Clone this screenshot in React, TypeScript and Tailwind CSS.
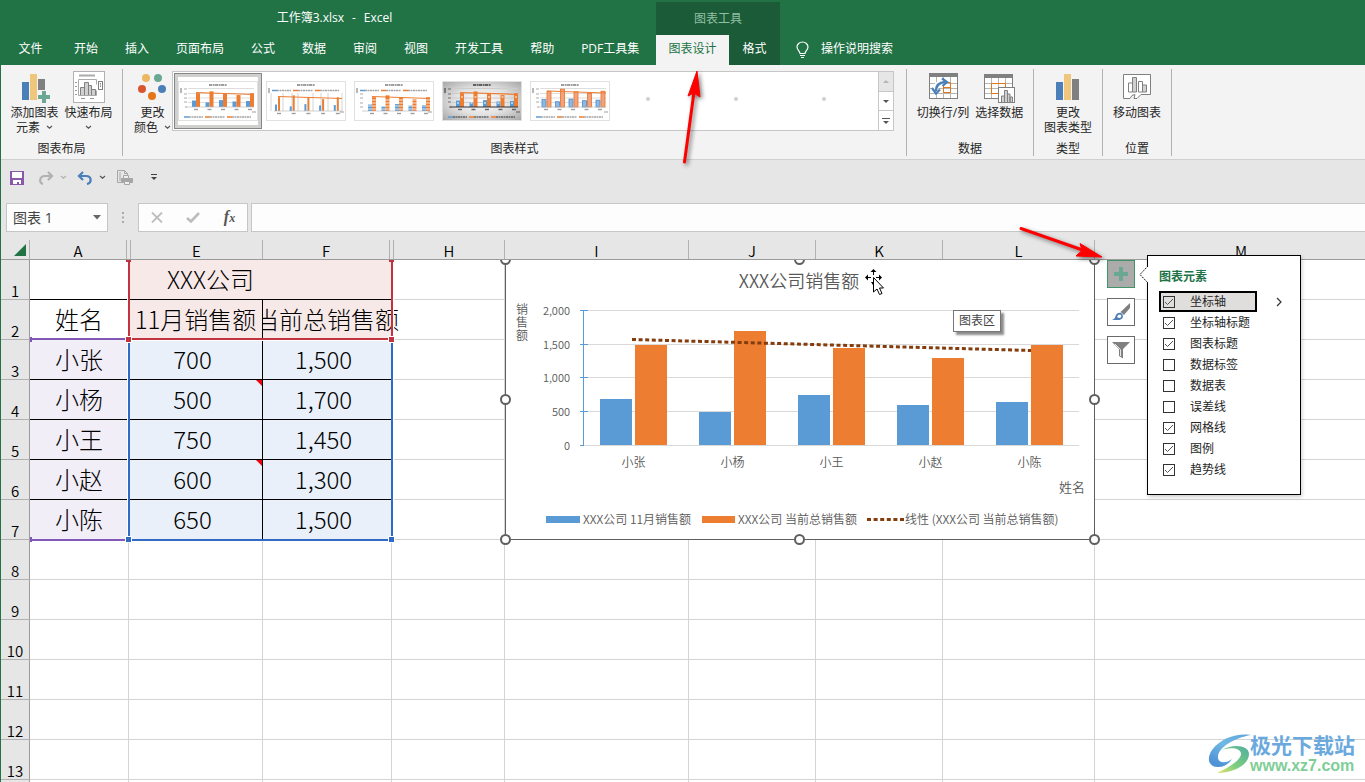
import React from "react";

const UI_FONT = "font-['Open_Sans','Noto_Sans_CJK_SC',sans-serif]";
const CJK_FONT = "font-['Noto_Sans_CJK_SC',sans-serif]";

/* ---------- small glyphs ---------- */

function Chevron({ className = "text-[#555]" }: { className?: string }) {
  return (
    <svg width="7" height="5" viewBox="0 0 7 5" className={className} aria-hidden="true">
      <path d="M1 1l2.5 2.2L6 1" fill="none" stroke="currentColor" strokeWidth="1.2" />
    </svg>
  );
}

function BarsIcon({ plus = false }: { plus?: boolean }) {
  return (
    <svg width="32" height="32" viewBox="0 0 32 32" aria-hidden="true">
      <rect x="4" y="11" width="7" height="18" fill="#4a7fb8" />
      <rect x="12" y="3" width="7" height="26" fill="#efc77c" />
      <rect x="20" y="8" width="7" height={plus ? 12 : 21} fill="#808080" />
      {plus && (
        <>
          <path d="M19 19h13v12H19z" fill="#f3f3f3" />
          <path d="M24 20h4v4h4v4h-4v4h-4v-4h-4v-4h4z" fill="#6ba893" />
        </>
      )}
    </svg>
  );
}

function QuickLayoutIcon() {
  return (
    <svg width="32" height="32" viewBox="0 0 32 32" fill="none" stroke="#808080" aria-hidden="true">
      <rect x=".5" y=".5" width="31" height="31" fill="#fff" stroke="#b1b1b1" />
      <path d="M6 4.500h16" stroke="#aaa" strokeWidth="2" />
      <path d="M5.500 8.500h18v5M5.500 8.500v16h18v-5" stroke="#aaa" />
      <path d="M2 11.500h2M2 15.500h2M2 19.500h2M2 23.500h2M8 27.500h4M17 27.500h4" stroke="#999" />
      <path d="M7.500 24V16.500h4V24M11.500 24V11.500h4V24M15.500 24V14.500h3V24M18.500 24V18.500h4V24" fill="#d0d0d0" />
      <rect x="25.500" y="10.500" width="4" height="8" />
      <path d="M27.500 12v5" strokeDasharray="1.500 1" />
    </svg>
  );
}

function ColorsIcon() {
  return (
    <svg width="32" height="32" viewBox="0 0 32 32" aria-hidden="true">
      <circle cx="10" cy="7" r="4" fill="#ecb763" />
      <circle cx="22" cy="7" r="4" fill="#6ba893" />
      <circle cx="6" cy="18" r="4" fill="#d9552f" />
      <circle cx="26" cy="18" r="4" fill="#4a7fb8" />
      <circle cx="16" cy="25" r="4" fill="#e27619" />
    </svg>
  );
}

function SwitchIcon() {
  return (
    <svg width="32" height="32" viewBox="0 0 32 32" fill="none" aria-hidden="true">
      <rect x="2.500" y="4.500" width="28" height="23" fill="#fff" stroke="#808080" />
      <path d="M3 12.500h27M3 17.500h27M3 22.500h27M9.500 5v22M16.500 5v22M23.500 5v22" stroke="#b5b5b5" />
      <rect x="2" y="2" width="29" height="4" fill="#808080" />
      <path d="M16.500 11.500h7v10h-7zM16.500 16.500h7" stroke="#e27619" />
      <path d="M8 21C8 15 11 11 18 11" stroke="#fff" strokeWidth="5" />
      <path d="M9 20c0-5 3-8.500 9-9" stroke="#4a7fb8" strokeWidth="2.400" />
      <path d="M5 17l4 5.500 4-4M15 7.500l5 3.500-4.500 4" stroke="#4a7fb8" strokeWidth="2.200" />
    </svg>
  );
}

function SelectDataIcon() {
  return (
    <svg width="32" height="32" viewBox="0 0 32 32" fill="none" aria-hidden="true">
      <rect x="1.500" y="4.500" width="28" height="23" fill="#fff" stroke="#808080" />
      <path d="M2 12.500h27M2 17.500h27M2 22.500h27M8.500 5v22M15.500 5v22M22.500 5v22" stroke="#b5b5b5" />
      <rect x="1" y="3" width="29" height="4" fill="#808080" />
      <path d="M8.500 23V12.500h14V16M8.500 22.500h7" stroke="#e27619" />
      <rect x="15.500" y="16.500" width="16" height="15" fill="#fff" stroke="#808080" />
      <path d="M18.500 31v-6h3v6M21.500 31V19.500h3V31M24.500 31v-8h2.500v8M27 31v-5h2.500v5" fill="#d0d0d0" stroke="#808080" />
    </svg>
  );
}

function MoveChartIcon() {
  return (
    <svg width="32" height="32" viewBox="0 0 32 32" fill="none" stroke="#808080" aria-hidden="true">
      <path d="M2.500 3.500h27v20H20l-4 4h-3l1-4-3 1-2 3H2.500z" fill="#fff" />
      <path d="M7.500 21v-9h4v9z" />
      <path d="M11.500 21V6.500h4V21z" fill="#d0d0d0" />
      <path d="M17.500 21V10.500h4V21z" />
      <path d="M21.500 21v-7h4v7z" fill="#d0d0d0" />
    </svg>
  );
}

/* ---------- ribbon ---------- */

function RibbonButton({ icon, children }: { icon: React.ReactNode; children: React.ReactNode }) {
  return (
    <button className="flex flex-col items-center px-[3px] text-xs leading-[15px] whitespace-nowrap text-[#262626]">
      <span className="mb-[2px] block h-8">{icon}</span>
      {children}
    </button>
  );
}

function RibbonGroup({
  label,
  className = "",
  children,
}: {
  label: string;
  className?: string;
  children: React.ReactNode;
}) {
  return (
    <section className={`flex flex-none flex-col justify-between border-r border-[#b1b1b1] pt-[2px] ${className}`}>
      <div className="flex justify-center">{children}</div>
      <h2 className="text-center text-xs leading-[15px] text-[#262626]">{label}</h2>
    </section>
  );
}

const SERIES = [
  { name: "小张", month: 700, total: 1500 },
  { name: "小杨", month: 500, total: 1700 },
  { name: "小王", month: 750, total: 1450 },
  { name: "小赵", month: 600, total: 1300 },
  { name: "小陈", month: 650, total: 1500 },
];

type ThumbKind = "plain" | "lines" | "striped" | "dark" | "outlined";

function Thumb({ kind }: { kind: ThumbKind }) {
  const topLegend = kind === "lines" || kind === "striped";
  const base = topLegend ? 30 : 26;
  const scale = kind === "outlined" ? 0.0105 : 0.0092;
  const thin = kind === "lines";
  const ink = kind === "dark" ? "#444" : "#888";
  const legendY = topLegend ? 9.5 : 36;
  const orange = kind === "outlined" ? "#f3a37c" : "#ed7d31";
  const blue = kind === "outlined" ? "#8db9e4" : "#5b9bd5";
  const gap = thin ? 3 : kind === "outlined" ? 5 : 4;
  return (
    <svg width="80" height="40" viewBox="0 0 80 40" aria-hidden="true">
      <defs>
        <radialGradient id="thumb-shade" r=".7">
          <stop offset="0" stopColor="#fff" />
          <stop offset=".5" stopColor="#e2e2e2" />
          <stop offset="1" stopColor="#a6a6a6" />
        </radialGradient>
      </defs>
      <rect x=".5" y=".5" width="79" height="39" fill={kind === "dark" ? "url(#thumb-shade)" : "#fff"} stroke="#e0e0e0" />
      <path d="M31 4h18" stroke={ink} strokeWidth="2" strokeDasharray="3 .6 2 .4" opacity=".8" />
      <path d="M3 7v5" stroke={ink} strokeWidth="1.500" opacity=".8" />
      {thin ? (
        <path d="M5 12v18M17 12v18M26 12v18M32 12v18M47 12v18M55 12v18M62 12v18M76 12v18" stroke="#d4d4d4" />
      ) : topLegend ? null : (
        <path d="M10 7.500h66M10 12.500h66M10 17h66M10 21.500h66" stroke={kind === "dark" ? "#ccc" : "#ddd"} />
      )}
      <path
        d={topLegend ? "M6 13h3M6 17h3M6 22h3M6 26h3" : "M6 8h3M6 13h3M6 17h3M6 21h3M7 26h2"}
        stroke={ink} strokeWidth="1.200" opacity={thin ? 0 : 0.7}
      />
      {SERIES.map((s, i) => {
        const x = (thin ? 9 : kind === "outlined" ? 12 : 14) + i * (thin ? 14.7 : 13.5);
        return (
          <g key={s.name}>
            <rect
              x={x} y={base - s.month * scale} width={thin ? 2 : 4} height={s.month * scale}
              fill={blue} stroke={kind === "outlined" ? "#4a8ac8" : "none"} strokeWidth=".8"
            />
            <rect
              x={x + gap} y={base - s.total * scale} width={thin ? 2 : 4} height={s.total * scale}
              fill={orange} stroke={kind === "outlined" ? "#e8702a" : "none"} strokeWidth=".8"
            />
            {kind === "striped" && (
              <path
                d={`M${x} ${base - 2}h9M${x} ${base - 5}h9M${x} ${base - 8}h9M${x} ${base - 11}h9`}
                stroke="#fff" strokeWidth=".8"
              />
            )}
            {kind === "dark" && (
              <path d={`M${x + 1} ${base - 4}h2M${x + 5} ${base - 10}h2`} stroke="#fff" strokeWidth="1" />
            )}
            <path d={`M${x + 2} ${base + 2.500}h4`} stroke={ink} strokeWidth="1.400" opacity=".8" />
          </g>
        );
      })}
      <path d={`M8 ${base}h68`} stroke={kind === "dark" ? "#333" : "#bbb"} strokeWidth={kind === "dark" ? 1.2 : 0.7} />
      <path
        d={kind === "outlined" ? "M17 10L76 12" : `M${thin ? 12 : 18} ${base - 14.500}L76 ${base - 12.500}`}
        stroke="#ed7d31" strokeWidth="1.200"
      />
      <path d="M74 31h4" stroke={ink} opacity=".8" />
      <path d={`M6 ${legendY}h5`} stroke="#5b9bd5" strokeWidth="1.500" />
      <path d={`M27 ${legendY}h5M49 ${legendY}h5`} stroke="#ed7d31" strokeWidth="1.500" />
      <path d={`M11 ${legendY}h14M32 ${legendY}h15M54 ${legendY}h19`} stroke={ink} strokeWidth="1.500" strokeDasharray="2 .5" opacity=".75" />
    </svg>
  );
}

const THUMBS: ThumbKind[] = ["plain", "lines", "striped", "dark", "outlined"];

function StyleGallery() {
  return (
    <div className="-ml-[2px] mr-1 flex h-[60px] w-[722px] border border-[#c6c6c6] bg-white">
      <div className="flex flex-1 items-center pl-px">
        {THUMBS.map((kind, i) => (
          <button
            key={kind}
            aria-label={`样式 ${i + 1}`}
            className={
              i === 0
                ? "h-14 w-[88px] border border-[#868686] bg-[#d0d0ce] p-[3px]"
                : "flex h-14 w-[88px] items-center justify-center"
            }
          >
            {i === 0 ? (
              <span className="flex h-full items-center justify-center bg-white">
                <Thumb kind={kind} />
              </span>
            ) : (
              <Thumb kind={kind} />
            )}
          </button>
        ))}
        {[6, 7, 8].map((n) => (
          <button key={n} aria-label={`样式 ${n}`} className="flex h-14 w-[88px] items-center pl-8">
            <span className="mb-1 size-1 rounded-full bg-[#cfcfcf]" />
          </button>
        ))}
      </div>
      <div className="flex w-[15px] flex-col border-l border-[#c6c6c6]">
        <button aria-label="向上" className="flex flex-1 items-center justify-center bg-[#e6e6e6]">
          <svg width="6" height="3" viewBox="0 0 6 3"><path d="M0 3l3-3 3 3z" fill="#b5b5b5" /></svg>
        </button>
        <button aria-label="向下" className="flex flex-1 items-center justify-center border-y border-[#c6c6c6]">
          <svg width="6" height="3" viewBox="0 0 6 3"><path d="M0 0l3 3 3-3z" fill="#555" /></svg>
        </button>
        <button aria-label="其他" className="flex flex-1 items-center justify-center">
          <svg width="8" height="6" viewBox="0 0 8 6"><path d="M0 .5h8" stroke="#555" /><path d="M1 3l3 3 3-3z" fill="#555" /></svg>
        </button>
      </div>
    </div>
  );
}

function Ribbon() {
  return (
    <div className="flex h-[95px] flex-none border-b border-[#d0d0d0] bg-[#f3f3f3] pt-1 pb-[3px]">
      <RibbonGroup label="图表布局" className="w-[122px]">
        <RibbonButton icon={<BarsIcon plus />}>
          <span>添加图表</span>
          <span className="flex items-center gap-1.5">元素 <Chevron /></span>
        </RibbonButton>
        <RibbonButton icon={<QuickLayoutIcon />}>
          <span>快速布局</span>
          <span className="flex h-[15px] items-center"><Chevron /></span>
        </RibbonButton>
      </RibbonGroup>
      <RibbonGroup label="图表样式" className="w-[784px]">
        <RibbonButton icon={<ColorsIcon />}>
          <span>更改</span>
          <span className="flex items-center gap-1.5">颜色 <Chevron /></span>
        </RibbonButton>
        <StyleGallery />
      </RibbonGroup>
      <RibbonGroup label="数据" className="w-[127px]">
        <RibbonButton icon={<SwitchIcon />}>切换行/列</RibbonButton>
        <RibbonButton icon={<SelectDataIcon />}>选择数据</RibbonButton>
      </RibbonGroup>
      <RibbonGroup label="类型" className="w-[69px]">
        <RibbonButton icon={<BarsIcon />}>
          <span>更改</span>
          <span>图表类型</span>
        </RibbonButton>
      </RibbonGroup>
      <RibbonGroup label="位置" className="w-[69px]">
        <RibbonButton icon={<MoveChartIcon />}>移动图表</RibbonButton>
      </RibbonGroup>
    </div>
  );
}

/* ---------- header ---------- */

const TABS = ["开始", "插入", "页面布局", "公式", "数据", "审阅", "视图", "开发工具", "帮助", "PDF工具集"];

function Header() {
  return (
    <header className="flex h-[65px] flex-none bg-[#217346] text-xs text-white">
      <div className="flex w-[655px] flex-none flex-col">
        <h1 className="flex h-[35px] items-center justify-center gap-2 pl-3">
          <span>工作簿3.xlsx</span>
          <span>-</span>
          <span>Excel</span>
        </h1>
        <nav className="flex h-[30px] gap-px pb-[2px]">
          <button className="w-[59px]">文件</button>
          {TABS.map((t) => (
            <button key={t} className="px-[13px] whitespace-nowrap">{t}</button>
          ))}
        </nav>
      </div>
      <div className="mt-[2px] flex flex-none flex-col bg-[#1b5b38]">
        <div className="flex h-[33px] items-center justify-center text-[#92bfa4]">图表工具</div>
        <div className="flex h-[30px]">
          <button className="w-[73px] bg-[#f3f3f3] pb-[2px] text-[#217346]">图表设计</button>
          <button className="w-[51px] pb-[2px]">格式</button>
        </div>
      </div>
      <button className="ml-4 flex h-[30px] items-center gap-3 self-end pb-[2px]">
        <svg width="13" height="18" viewBox="0 0 13 18" fill="none" stroke="#fff" strokeWidth="1.200" className="mt-[2px]">
          <path d="M4 12.500C4 10 1 9 1 6a5.500 5 0 0 1 11 0c0 3-3 4-3 6.500zM4 14.500h5M5 16.500h3" />
        </svg>
        操作说明搜索
      </button>
    </header>
  );
}

function QuickAccess() {
  return (
    <div className="flex h-[35px] flex-none items-center pl-2">
      <button aria-label="保存">
        <svg width="16" height="16" viewBox="0 0 16 16">
          <path d="M1 1h14v14H1z" fill="#8a57ab" />
          <path d="M3 2h10v6H3zM4 10h8v4h-2v-2H8v2H4z" fill="#fff" />
        </svg>
      </button>
      <button aria-label="恢复" className="ml-[13px] flex items-center gap-1.5 text-[#b1b1b1]">
        <svg width="16" height="14" viewBox="0 0 16 14" fill="none" stroke="currentColor" strokeWidth="2.200">
          <path d="M10 1l4 4-4 4M14 5H7C1 5 1 12 5 13" />
        </svg>
        <Chevron className="text-[#b1b1b1]" />
      </button>
      <button aria-label="撤消" className="ml-2.5 flex items-center gap-1.5 text-[#4a7fb8]">
        <svg width="16" height="14" viewBox="0 0 16 14" fill="none" stroke="currentColor" strokeWidth="2.200">
          <path d="M6 1L2 5l4 4M2 5h7c6 0 6 7 1 8" />
        </svg>
        <Chevron />
      </button>
      <button aria-label="打印预览" className="ml-2.5">
        <svg width="18" height="17" viewBox="0 0 18 17" fill="none" stroke="#a6a6a6">
          <path d="M5 13.500H1.500v-12h7l3 3V7M8.500 1.500v3h3M4 3v9" />
          <path d="M7.500 10V6.500h5V10" fill="#eee" />
          <path d="M5.500 9.500h11v4h-11z" fill="#a6a6a6" />
          <path d="M8.500 12.500h5v3h-5z" fill="#eee" />
        </svg>
      </button>
      <button aria-label="自定义快速访问工具栏" className="ml-4">
        <svg width="8" height="7" viewBox="0 0 8 7"><path d="M1 .5h6" stroke="#444" /><path d="M1 3h6L4 6z" fill="#444" /></svg>
      </button>
    </div>
  );
}

function FormulaBar() {
  return (
    <div className="flex h-[45px] flex-none items-center pl-[5px]">
      <div className="flex h-[29px] w-[102px] flex-none items-center border border-[#c6c6c6] bg-[#fdfdfd]">
        <input aria-label="名称框" defaultValue="图表 1" className="w-full min-w-0 bg-transparent pl-1.5 text-[14px] text-[#444] outline-none" />
        <svg width="8" height="5" viewBox="0 0 8 5" className="mr-1.5 flex-none"><path d="M0 0h8L4 4.500z" fill="#666" /></svg>
      </div>
      <svg width="2" height="12" viewBox="0 0 2 12" className="mx-[14px] flex-none">
        <path d="M0 0h2v2H0zM0 4.500h2v2H0zM0 9h2v2H0z" fill="#aaa" />
      </svg>
      <div className="flex h-[29px] w-[110px] flex-none items-center justify-around border border-[#c6c6c6] bg-[#fdfdfd]">
        <button aria-label="取消">
          <svg width="12" height="11" viewBox="0 0 12 11" stroke="#bdbdbd" strokeWidth="1.800"><path d="M1 .5l10 10M11 .5l-10 10" /></svg>
        </button>
        <button aria-label="输入">
          <svg width="14" height="11" viewBox="0 0 14 11" fill="none" stroke="#bdbdbd" strokeWidth="2.600"><path d="M1 6l4 3.500L13 1" /></svg>
        </button>
        <button aria-label="插入函数" className="font-['Liberation_Serif',serif] text-[16px] leading-4 font-bold text-[#555] italic">
          f<span className="text-[12px]">x</span>
        </button>
      </div>
      <input aria-label="编辑栏" className="ml-[3px] h-[29px] min-w-0 flex-1 border border-r-0 border-[#c6c6c6] bg-[#fdfdfd] px-2 outline-none" />
    </div>
  );
}

/* ---------- sheet ---------- */

const HEADS: { name: string; line: string }[] = [
  { name: "A", line: "mr-[2px] border-r" },
  { name: "E", line: "ml-px border-x" },
  { name: "F", line: "mr-[2px] border-r" },
  { name: "H", line: "ml-px border-x" },
  { name: "I", line: "border-r" },
  { name: "J", line: "border-r" },
  { name: "K", line: "border-r" },
  { name: "L", line: "border-r" },
  { name: "M", line: "" },
];
const ROWS = [1, 2, 3, 4, 5, 6, 7, 8, 9, 10, 11, 12, 13, 14];

const GRID = "border-r border-b border-[#d4d4d4] p-0";
const INNER = "border-r border-b border-r-black border-b-black p-0 text-center align-top";

function DataCells({ row }: { row: number }) {
  if (row === 1) {
    return (
      <>
        <td className="border-r border-b border-r-[#d4d4d4] border-b-black p-0" />
        <td colSpan={2} className="border-b border-black bg-[#f8e9e9] p-0 pr-[100px] text-center align-top">XXX公司</td>
      </>
    );
  }
  if (row === 2) {
    return (
      <>
        <td className="border-r border-b border-r-[#d4d4d4] border-b-black p-0 text-center align-top">姓名</td>
        <td className={`${INNER} bg-[#f8e9e9]`}>11月销售额</td>
        <td className="border-b border-black bg-[#f8e9e9] p-0 align-top">
          <div className="w-[138px] overflow-hidden"><div className="-ml-2 whitespace-nowrap">当前总销售额</div></div>
        </td>
      </>
    );
  }
  if (row <= 7) {
    const s = SERIES[row - 3];
    return (
      <>
        <td className="border-r border-b border-black bg-[#f2eef8] p-0 text-center align-top">{s.name}</td>
        <td className={`${INNER} relative bg-[#e9f0fa] pr-[6px]`}>
          {s.month}
          {(row === 4 || row === 6) && (
            <svg width="6" height="6" viewBox="0 0 6 6" className="absolute top-0 right-0"><path d="M0 0h6v6z" fill="#f00010" /></svg>
          )}
        </td>
        <td className="border-b border-black bg-[#e9f0fa] p-0 pr-2 text-center align-top">{s.total.toLocaleString("en-US")}</td>
      </>
    );
  }
  return (
    <>
      <td className={GRID} />
      <td className={GRID} />
      <td className={GRID} />
    </>
  );
}

function Grid() {
  return (
    <table className={`w-full min-w-[1386px] table-fixed border-separate border-spacing-0 bg-white text-[24px] leading-[37px] font-light text-black ${CJK_FONT}`}>
      <colgroup>
        <col className="w-[29px]" />
        <col className="w-[99px]" />
        <col className="w-[134px]" />
        <col className="w-[129px]" />
        <col className="w-[113px]" />
        <col className="w-[184px]" />
        <col className="w-[127px]" />
        <col className="w-[127px]" />
        <col className="w-[152px]" />
        <col />
      </colgroup>
      <thead>
        <tr className="h-5 bg-[#e6e6e6] text-[15px] leading-[19px]">
          <th aria-label="全选" className="border-r border-b border-r-[#b1b1b1] border-b-[#9b9b9b] p-0">
            <svg width="12" height="12" viewBox="0 0 12 12" className="ml-auto mr-[3px]"><path d="M12 0v12H0z" fill="#217346" /></svg>
          </th>
          {HEADS.map((h) => (
            <th key={h.name} scope="col" className="border-b border-[#9b9b9b] p-0 font-[350]">
              <div className={`h-[19px] border-[#b1b1b1] pt-px ${h.line}`}>{h.name}</div>
            </th>
          ))}
        </tr>
      </thead>
      <tbody>
        {ROWS.map((r) => (
          <tr key={r} className="h-10">
            <th scope="row" className="border-r border-b border-r-[#9b9b9b] border-b-[#b1b1b1] bg-[#e6e6e6] p-0 align-bottom text-[15px] leading-4 font-[350]">
              {r}
            </th>
            <DataCells row={r} />
            <td className={GRID} />
            <td className={GRID} />
            <td className={GRID} />
            <td className={GRID} />
            <td className={GRID} />
            <td className={GRID} />
          </tr>
        ))}
      </tbody>
    </table>
  );
}

function RangeFrames() {
  return (
    <div aria-hidden="true">
      <div className="absolute top-[98px] left-[30px] h-[2px] w-[97px] bg-[#8257b8]" />
      <div className="absolute top-[299px] left-[30px] h-[2px] w-[97px] bg-[#8257b8]" />
      <div className="absolute top-[97px] left-[29px] h-[5px] w-[2px] bg-[#8257b8]" />
      <div className="absolute top-[297px] left-[29px] h-[5px] w-[2px] bg-[#8257b8]" />
      <div className="absolute top-[100px] left-[126px] h-[202px] w-[267px] border border-white">
        <div className="size-full border-2 border-t-0 border-[#2f6ac4]" />
      </div>
      <div className="absolute top-[20px] left-[126px] h-[81px] w-[267px] border border-t-0 border-white">
        <div className="size-full border-2 border-t-0 border-[#c1343f]" />
      </div>
      <div className="absolute top-[96px] left-[124px] size-[7px] border border-white bg-[#c1343f]" />
      <div className="absolute top-[96px] left-[387px] size-[7px] border border-white bg-[#c1343f]" />
      <div className="absolute top-[20px] left-[125px] h-[2px] w-[5px] bg-[#c1343f]" />
      <div className="absolute top-[20px] left-[388px] h-[2px] w-[5px] bg-[#c1343f]" />
      <div className="absolute top-[296px] left-[124px] size-[7px] border border-white bg-[#2f6ac4]" />
      <div className="absolute top-[296px] left-[387px] size-[7px] border border-white bg-[#2f6ac4]" />
    </div>
  );
}

const TICKS = [0, 500, 1000, 1500, 2000];
const yOf = (v: number) => 185.5 - Math.round(v * 0.0675);

function SalesChart() {
  return (
    <svg
      width="602" height="287" viewBox="-6 0 602 287"
      className={`absolute top-[20px] left-[498px] ${CJK_FONT}`}
      fill="#595959" fontSize="12" fontWeight="350" role="img" aria-label="XXX公司销售额"
    >
      <path d="M.5 -1V279.500H589.500V-1" fill="#fff" stroke="#5f5f5f" />
      <text x="294" y="28" fontSize="18" textAnchor="middle">XXX公司销售额</text>
      <text x="11" y="54">销</text>
      <text x="11" y="67">售</text>
      <text x="11" y="80">额</text>
      {TICKS.map((t) => (
        <g key={t}>
          <path d={`M79 ${yOf(t)}H574`} stroke="#d9d9d9" />
          <path d={`M75 ${yOf(t)}H${t ? 83 : 79}`} stroke="#5b9bd5" />
          <text x="65" y={yOf(t) + 4} fontSize="11" textAnchor="end">{t.toLocaleString("en-US")}</text>
        </g>
      ))}
      <path d="M78.500 50V186" stroke="#5b9bd5" />
      {SERIES.map((s, i) => (
        <g key={s.name}>
          <rect x={95 + i * 99} y={yOf(s.month) + 0.5} width="32" height={184.5 - yOf(s.month)} fill="#5b9bd5" />
          <rect x={130 + i * 99} y={yOf(s.total) + 0.5} width="32" height={184.5 - yOf(s.total)} fill="#ed7d31" />
          <text x={128.500 + i * 99} y="207" textAnchor="middle">{s.name}</text>
        </g>
      ))}
      <path d="M127 79.500L526 90.500" stroke="#843c0c" strokeWidth="3" strokeDasharray="4 2.600" />
      <text x="554" y="232" fontSize="13">姓名</text>
      <rect x="41" y="256" width="34" height="7" fill="#5b9bd5" />
      <text x="78" y="264">XXX公司 11月销售额</text>
      <rect x="197" y="256" width="33" height="7" fill="#ed7d31" />
      <text x="233" y="264">XXX公司 当前总销售额</text>
      <path d="M362 259.500h37" stroke="#843c0c" strokeWidth="3" strokeDasharray="4 2.600" />
      <text x="400" y="264">线性 (XXX公司 当前总销售额)</text>
      <g fill="#fff" stroke="#5f5f5f" strokeWidth="2">
        {[0.5, 294.5, 589.5].map((x) => (
          <g key={x}>
            <circle cx={x} cy="-0.500" r="4.500" />
            <circle cx={x} cy="279.500" r="4.500" />
          </g>
        ))}
        <circle cx=".5" cy="139.500" r="4.500" />
        <circle cx="589.500" cy="139.500" r="4.500" />
      </g>
    </svg>
  );
}

const ELEMENTS: { label: string; on: boolean }[] = [
  { label: "坐标轴", on: true },
  { label: "坐标轴标题", on: true },
  { label: "图表标题", on: true },
  { label: "数据标签", on: false },
  { label: "数据表", on: false },
  { label: "误差线", on: false },
  { label: "网格线", on: true },
  { label: "图例", on: true },
  { label: "趋势线", on: true },
];

function ElementsPanel() {
  return (
    <div className="absolute top-[15px] left-[1146px] h-[240px] w-[154px] border border-black bg-white pt-[11px] pl-[11px] text-xs text-[#262626] shadow-[1px_2px_4px_rgba(0,0,0,0.2)]">
      <svg width="10" height="19" viewBox="0 0 10 19" className="absolute top-[9px] -left-[9px]" aria-hidden="true">
        <path d="M10 0L1 9.500 10 19" fill="#fff" />
        <path d="M9 1L1 9.500 9 18" fill="none" stroke="#000" strokeDasharray="1.500 1" />
      </svg>
      <h3 className="h-6 leading-[20px] font-bold text-[#217346]">图表元素</h3>
      {ELEMENTS.map((e, i) => (
        <div key={e.label} className="flex h-[21px] items-center">
          <label
            className={
              i === 0
                ? "flex h-[21px] w-[98px] items-center border-2 border-black bg-[#e0dedd] pl-[2px]"
                : "flex h-[21px] items-center pl-1"
            }
          >
            <span className="relative block size-3">
              <input type="checkbox" defaultChecked={e.on} className="peer block size-3 appearance-none border border-[#333]" />
              <svg width="12" height="12" viewBox="0 0 12 12" className="pointer-events-none absolute inset-0 hidden peer-checked:block">
                <path d="M2 6l2.500 2.500L10 3" fill="none" stroke="#555" />
              </svg>
            </span>
            <span className="ml-[15px]">{e.label}</span>
          </label>
          {i === 0 && (
            <svg width="6" height="10" viewBox="0 0 6 10" className="ml-[19px]"><path d="M1 1l4 4-4 4" fill="none" stroke="#333" strokeWidth="1.200" /></svg>
          )}
        </div>
      ))}
    </div>
  );
}

function ChartButtons() {
  return (
    <div className="absolute top-[20px] left-[1106px] flex flex-col gap-[10px]">
      <button aria-label="图表元素" className="flex size-7 items-center justify-center border border-[#3f9468] bg-[#ababab]">
        <svg width="14" height="14" viewBox="0 0 14 14"><path d="M5 0h4v5h5v4H9v5H5V9H0V5h5z" fill="#6ba893" /></svg>
      </button>
      <button aria-label="图表样式" className="flex size-7 items-center justify-center border border-[#6a6a6a] bg-white">
        <svg width="20" height="20" viewBox="0 0 20 20">
          <path d="M19 1v5l-6 7-3.500-3z" fill="#808080" />
          <path d="M1 18c3-1 3-3 4-5 1.500-2.500 5-3 6.500-.5 1.500 3-1 5.500-4 5.500z" fill="#4a7fb8" />
          <path d="M6 15c1-3 3-3 4-2s0 3-2 3z" fill="#fff" />
        </svg>
      </button>
      <button aria-label="图表筛选器" className="flex size-7 items-center justify-center border border-[#6a6a6a] bg-white">
        <svg width="18" height="18" viewBox="0 0 18 18">
          <path d="M0 1h18l-7 7v9.500l-4-2.500V8z" fill="#808080" />
          <path d="M3 3l5.500 5.500V15" fill="none" stroke="#e8e8e8" />
        </svg>
      </button>
    </div>
  );
}

function MoveCursor() {
  return (
    <svg width="20" height="28" viewBox="0 0 20 28" className="absolute top-[28px] left-[863px]" aria-hidden="true">
      <path d="M9.500 1l-3 3H9v3h1V4h2.500zM1 9.500l3-3V9h3v1H4v2.500zM18 9.500l-3-3V9h-3v1h3v2.500zM7 14h2v3z" fill="#000" />
      <path d="M9.500 9.500V24l3.500-3 2.500 5.500 2.500-1-2.500-5.500h4z" fill="#fff" stroke="#000" />
    </svg>
  );
}

function Watermark() {
  return (
    <div className="absolute right-[10px] bottom-[7px] flex items-center" aria-label="极光下载站">
      <svg width="46" height="42" viewBox="0 0 46 42" aria-hidden="true">
        <defs>
          <linearGradient id="swirl" x1="1" y1="0" x2=".3" y2="1">
            <stop offset="0" stopColor="#5fa4dc" />
            <stop offset=".5" stopColor="#6fb9e4" />
            <stop offset="1" stopColor="#4f92d6" />
          </linearGradient>
          <linearGradient id="leaf" x1="1" y1="0" x2="0" y2="1">
            <stop offset="0" stopColor="#4fae9e" />
            <stop offset=".6" stopColor="#7fcf7f" />
            <stop offset="1" stopColor="#e6e46a" />
          </linearGradient>
        </defs>
        <path d="M44 2C30 0 14 5 5 17-1 26 2 34 11 34c6 0 11-3 14-8-5 4-13 5-14-1C10 15 27 5 44 2z" fill="url(#swirl)" />
        <path d="M15 17c9-3 19-2 19 4 0 6-13 14-24 19 16 0 32-8 32-19 0-8-15-11-27-4z" fill="url(#leaf)" />
      </svg>
      <div className={`-ml-[3px] ${CJK_FONT}`}>
        <div className="text-[21px] leading-[24px] font-bold text-[#6aa9de]">极光下载站</div>
        <div className="font-['Liberation_Sans',sans-serif] text-[16px] leading-[19px] font-bold text-[#7fce98]">www.xz7.com</div>
      </div>
    </div>
  );
}

function Pointers() {
  return (
    <svg
      width="440" height="200" viewBox="675 65 440 200"
      className="pointer-events-none absolute top-[65px] left-[674px] drop-shadow-[2px_2px_2px_rgba(0,0,0,0.5)]"
      fill="#fe0000" stroke="#fe0000" aria-hidden="true"
    >
      <path d="M684.500 162L694 92" strokeWidth="3" strokeLinecap="round" />
      <path d="M697 71L688 96l6-3 6 4z" />
      <path d="M1021 228.500L1084 250.500" strokeWidth="3" strokeLinecap="round" />
      <path d="M1102 257L1080 243.500l2 7-6 5.500z" />
    </svg>
  );
}

export default function App() {
  return (
    <div className={`relative flex h-screen flex-col overflow-hidden border-l border-[#217346] bg-[#e6e6e6] ${UI_FONT}`}>
      <Header />
      <Ribbon />
      <QuickAccess />
      <FormulaBar />
      <main className="relative min-h-0 flex-1 overflow-hidden">
        <Grid />
        <RangeFrames />
        <SalesChart />
        <div role="tooltip" className="absolute top-[70px] left-[952px] border border-[#767676] bg-white px-[5px] text-xs leading-[20px] text-[#444] shadow-[3px_3px_2px_rgba(0,0,0,0.45)]">
          图表区
        </div>
        <MoveCursor />
        <ChartButtons />
        <ElementsPanel />
        <Watermark />
      </main>
      <Pointers />
    </div>
  );
}
